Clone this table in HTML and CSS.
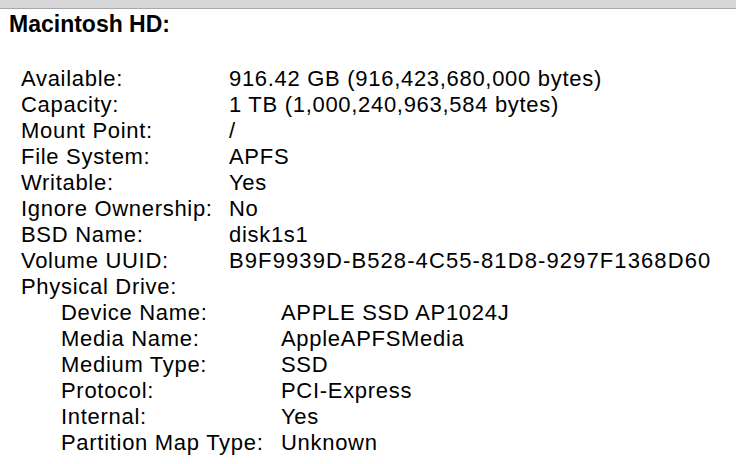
FILE: index.html
```html
<!DOCTYPE html>
<html>
<head>
<meta charset="utf-8">
<link rel="stylesheet" href="styles.css">
</head>
<body>
<div class="toolbar"></div>
<div class="content">
  <h1 class="title">Macintosh HD:</h1>
  <div class="props">
    <div class="row"><span class="label">Available:</span><span class="value">916.42 GB (916,423,680,000 bytes)</span></div>
    <div class="row"><span class="label">Capacity:</span><span class="value">1 TB (1,000,240,963,584 bytes)</span></div>
    <div class="row"><span class="label">Mount Point:</span><span class="value">/</span></div>
    <div class="row"><span class="label">File System:</span><span class="value">APFS</span></div>
    <div class="row"><span class="label">Writable:</span><span class="value">Yes</span></div>
    <div class="row"><span class="label">Ignore Ownership:</span><span class="value">No</span></div>
    <div class="row"><span class="label">BSD Name:</span><span class="value">disk1s1</span></div>
    <div class="row"><span class="label">Volume UUID:</span><span class="value uuid">B9F9939D-B528-4C55-81D8-9297F1368D60</span></div>
    <div class="row"><span class="label">Physical Drive:</span><span class="value"></span></div>
    <div class="nested">
      <div class="row"><span class="label">Device Name:</span><span class="value">APPLE SSD AP1024J</span></div>
      <div class="row"><span class="label">Media Name:</span><span class="value">AppleAPFSMedia</span></div>
      <div class="row"><span class="label">Medium Type:</span><span class="value">SSD</span></div>
      <div class="row"><span class="label">Protocol:</span><span class="value">PCI-Express</span></div>
      <div class="row"><span class="label">Internal:</span><span class="value">Yes</span></div>
      <div class="row"><span class="label">Partition Map Type:</span><span class="value">Unknown</span></div>
    </div>
  </div>
</div>
</body>
</html>
```
FILE: styles.css
```css
html, body {
  margin: 0;
  padding: 0;
  background: #ffffff;
  overflow: hidden;
}
body {
  font-family: "Liberation Sans", Arial, sans-serif;
  color: #000;
  width: 736px;
  height: 464px;
}
.toolbar {
  height: 8px;
  background: #d7d6d8;
  border-bottom: 1px solid #a8a7a9;
}
.content {
  padding: 1px 0 0 9px;
}
.title {
  margin: 0;
  font-size: 23px;
  font-weight: bold;
  line-height: 28px;
}
.props {
  margin-top: 28px;
  padding-left: 12px;
  font-size: 22px;
  line-height: 26px;
  letter-spacing: 0.7px;
}
.row {
  display: grid;
  grid-template-columns: 208px 1fr;
  white-space: nowrap;
}
.uuid {
  letter-spacing: 1.1px;
}
.nested {
  padding-left: 40px;
}
.nested .row {
  grid-template-columns: 220px 1fr;
}
```
